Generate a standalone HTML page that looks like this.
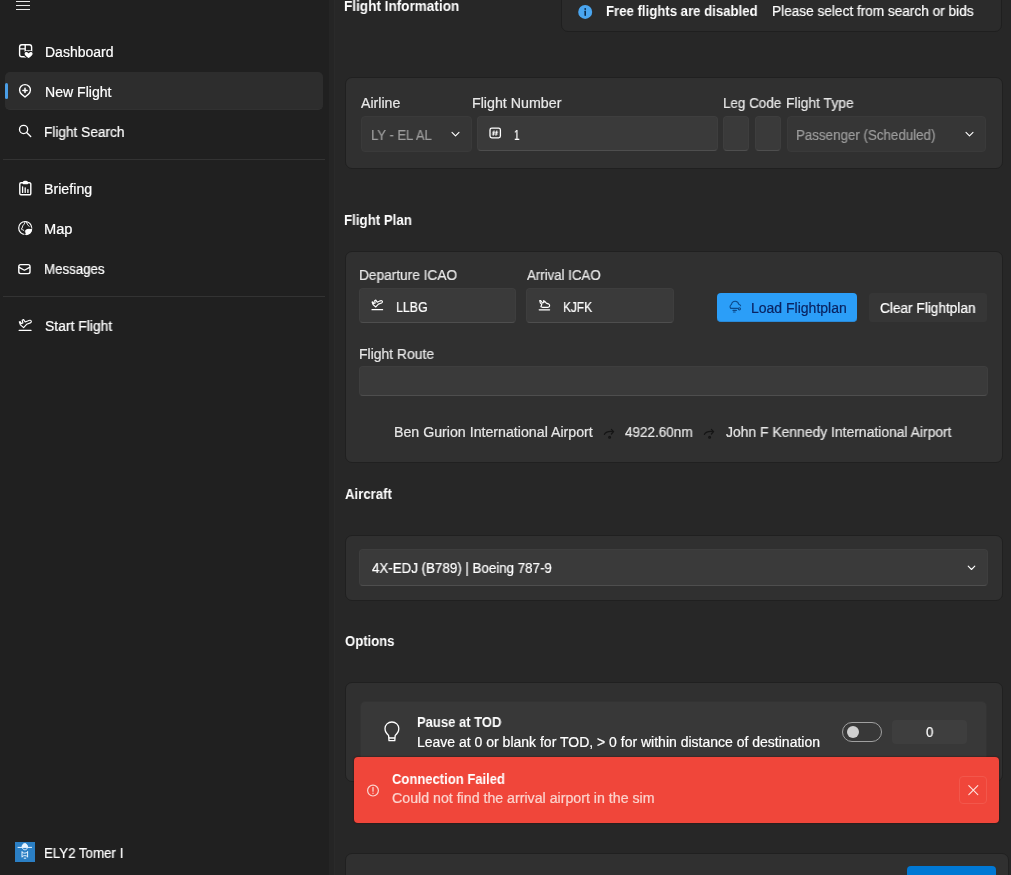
<!DOCTYPE html>
<html><head><meta charset="utf-8"><style>
*{box-sizing:border-box;margin:0;padding:0}
html,body{width:1011px;height:875px;overflow:hidden;background:#272727;font-family:"Liberation Sans",sans-serif;color:#fff;font-size:14px}
.a{position:absolute}
.t{position:absolute;white-space:nowrap;line-height:16px;font-size:14px;transform-origin:0 0;will-change:transform;-webkit-text-stroke:0.2px currentColor}
.card{position:absolute;left:345px;width:658px;background:#303030;border:1px solid #202020;border-radius:7px}
.inp{position:absolute;background:#3a3a3a;border:1px solid #3e3e3e;border-bottom-color:#4e4e4e;border-radius:4px}
.cmb{position:absolute;background:#363636;border:1px solid #3a3a3a;border-radius:4px}
svg{position:absolute;left:0;top:0}
</style></head><body>

<div class="a" style="left:0;top:0;width:329px;height:875px;background:#202020"></div>
<div class="a" style="left:329px;top:0;width:6px;height:875px;background:#252525"></div>
<div class="a" style="left:334px;top:0;width:1px;height:875px;background:#2a2a2a"></div>

<!-- nav selection -->
<div class="a" style="left:5px;top:72px;width:318px;height:38px;background:#2d2d2d;border-radius:5px;border-bottom:1px solid #313131"></div>
<div class="a" style="left:5px;top:83px;width:3px;height:16px;background:#4a9ee6;border-radius:2px"></div>
<div class="a" style="left:3px;top:159px;width:322px;height:1px;background:#333"></div>
<div class="a" style="left:3px;top:296px;width:322px;height:1px;background:#333"></div>

<!-- avatar -->
<div class="a" style="left:15px;top:842px;width:20px;height:20px;background:#2b7fc4"></div>

<!-- info bar -->
<div class="a" style="left:561px;top:-8px;width:441px;height:40px;background:#2b2b2b;border:1px solid #1f1f1f;border-radius:7px"></div>

<!-- card 1 -->
<div class="card" style="top:77px;height:92px"></div>
<div class="cmb" style="left:361px;top:116px;width:111px;height:36px"></div>
<div class="inp" style="left:477px;top:116px;width:241px;height:35px"></div>
<div class="inp" style="left:723px;top:116px;width:26px;height:35px"></div>
<div class="inp" style="left:755px;top:116px;width:26px;height:35px"></div>
<div class="cmb" style="left:787px;top:116px;width:199px;height:36px"></div>

<!-- card 2 -->
<div class="card" style="top:251px;height:212px"></div>
<div class="inp" style="left:359px;top:288px;width:157px;height:35px"></div>
<div class="inp" style="left:526px;top:288px;width:148px;height:35px"></div>
<div class="a" style="left:717px;top:293px;width:140px;height:29px;background:#2b9ef8;border-radius:4px;border-bottom:1px solid #2a8ad8"></div>
<div class="a" style="left:868px;top:292px;width:120px;height:31px;background:#363636;border:1px solid #303030;border-radius:4px"></div>
<div class="inp" style="left:359px;top:366px;width:629px;height:30px"></div>

<!-- card 3 -->
<div class="card" style="top:535px;height:66px"></div>
<div class="inp" style="left:359px;top:549px;width:629px;height:37px"></div>

<!-- card 4 -->
<div class="card" style="top:682px;height:100px"></div>
<div class="a" style="left:360px;top:701px;width:627px;height:70px;background:#383838;border:1px solid #333;border-radius:5px"></div>
<div class="a" style="left:842px;top:722px;width:40px;height:20px;border:1px solid #a0a0a0;border-radius:10px;background:transparent"></div>
<div class="a" style="left:847px;top:726px;width:12px;height:12px;border-radius:6px;background:#cfcfcf"></div>
<div class="a" style="left:892px;top:720px;width:75px;height:24px;background:#3e3e3e;border-radius:4px"></div>

<!-- toast -->
<div class="a" style="left:354px;top:757px;width:645px;height:66px;background:#f0463a;border-radius:4px;box-shadow:0 0 2px #3a0a06"></div>
<div class="a" style="left:959px;top:776px;width:28px;height:28px;border:1px solid #f2574b;border-radius:4px"></div>

<!-- bottom card -->
<div class="card" style="top:853px;height:40px;width:664px"></div>
<div class="a" style="left:907px;top:866px;width:89px;height:20px;background:#0078d4;border-radius:4px"></div>


<svg width="1011" height="875" viewBox="0 0 1011 875" fill="none" stroke-linecap="round" stroke-linejoin="round">
<!-- hamburger -->
<g stroke="#e6e6e6" stroke-width="1" stroke-linecap="butt">
<path d="M16 1.5H30M16 5.5H30M16 9.5H30"/>
</g>
<g stroke="#fff" stroke-width="1.4">
<!-- dashboard -->
<rect x="19.6" y="44.8" width="12" height="12" rx="2.2"/>
<path d="M25.2 45V56.8M19.8 48.9H25.2M25.2 51H31.4"/>
</g>
<path d="M28.6 52.6C29.8 50.8 33.2 51 33.2 53.8 33.2 55.6 31 57.4 28.6 58.8 26.2 57.4 24 55.6 24 53.8 24 51 27.4 50.8 28.6 52.6Z" fill="#fff" stroke="#202020" stroke-width="1.2"/>
<!-- new flight pin -->
<g stroke="#fff" stroke-width="1.4">
<path d="M25 97.05L21.53 94.14A5.4 5.4 0 1 1 28.47 94.14Z"/>
<path d="M25 88.3V92.5M22.9 90.4H27.1" stroke-width="1.5"/>
<!-- search -->
<circle cx="23.6" cy="129.45" r="4.1" stroke-width="1.3"/>
<path d="M26.6 132.5L30.7 136.4"/>
<!-- briefing -->
<path d="M21 182.8H23.4M27.4 182.8H29.6A1.2 1.2 0 0 1 30.8 184V193.6A1.2 1.2 0 0 1 29.6 194.8H21A1.2 1.2 0 0 1 19.8 193.6V184A1.2 1.2 0 0 1 21 182.8Z"/>
<path d="M23.4 182.4A1.2 1.2 0 0 1 24.6 181.4H26.2A1.2 1.2 0 0 1 27.4 182.4V183.6H23.4Z" fill="#fff"/>
<path d="M22.6 186.8V192.4M25.2 187.8V192.4M27.9 189.6V192.4" stroke-width="1.3"/>
<!-- map globe -->
<circle cx="25.2" cy="228" r="6.5" stroke-width="1.2"/>
<path d="M25 221.8C24.9 223.6 24 224.4 23.2 225.2 22.2 226.2 22.8 227.6 21.6 228.8M21.8 229.6C23 229.6 23.8 230.2 24.4 231.2" stroke-width="1"/>
<path d="M26.6 222C26.8 223.6 27.6 225.2 29.2 226.4" stroke-width="1"/>
<path d="M25.4 230C27.4 228.4 30.8 228.4 32.2 229.6 31.8 232.8 29.6 235 26.4 235.2 25.4 233.4 24.8 231.4 25.4 230Z" fill="#fff" stroke="none"/>
<path d="M24.9 235C24.3 233.2 24.1 231.2 24.9 229.6 26.8 227.8 29.6 227.6 31.6 228.2" stroke="#202020" stroke-width="0.8"/>
<!-- messages -->
<rect x="18.8" y="264.6" width="11.2" height="9" rx="1.8"/>
<path d="M19.2 267.4L24.4 270.2L29.6 267.4" stroke-width="1.3"/>
<!-- start flight -->
<path d="M19.2 330.4H31" stroke-width="1.3"/>
<path d="M19.3 321.8L20.4 324.9L23.6 327.6L26.6 324.3L30.3 322.9C31.6 322.5 31.7 320.6 30.4 320.3 29.4 320.1 28.4 320.5 27.6 320.9L25.2 322L23.6 319.6L22.2 320.3L22.9 323L21.2 323.6L20.3 321.7Z" stroke-width="1.15"/>
</g>
<!-- avatar figure -->
<g stroke="#e8f4ff" stroke-width="1" fill="none">
<path d="M18 847.4H31.6"/>
<path d="M22 847.2C22 845 23.2 843.6 24.8 843.6 26.4 843.6 27.6 845 27.6 847.2" fill="#e8f4ff"/>
<path d="M22.6 848.4C23 850.4 26.8 850.4 27.2 848.4"/>
<path d="M22 851.6V857M27.6 851.6V857M22.4 852.4C24 853.6 25.6 853.4 27.4 852.2M22.4 856.4C24 855.2 25.8 855.4 27.4 856.4M24.2 858.2H25.8"/>
</g>

<!-- info icon -->
<circle cx="585.2" cy="11.9" r="7" fill="#4aa6f0"/>
<path d="M585.2 11.2V15.2" stroke="#0b2a4a" stroke-width="1.6"/>
<circle cx="585.2" cy="9" r="0.9" fill="#0b2a4a"/>

<!-- chevrons -->
<g stroke="#fff" stroke-width="1.1">
<path d="M452 132.4L455.5 135.9L459 132.4"/>
<path d="M966 132.4L969.5 135.9L973 132.4"/>
<path d="M968.2 566.2L971.5 569.5L974.8 566.2"/>
</g>
<!-- hash icon -->
<rect x="490" y="128.2" width="10.4" height="9.6" rx="1.8" stroke="#fff" stroke-width="1.3"/>
<path d="M494 130.8L493.2 135.4M496.8 130.8L496 135.4M492.6 132.2H497.8M492.2 134H497.4" stroke="#fff" stroke-width="0.9"/>

<!-- departure icon -->
<g stroke="#fff" stroke-width="1.2">
<path d="M372 309.7H382.6"/>
<g transform="translate(372.1 300.1) scale(0.86) translate(-19.3 -319.6)">
<path d="M19.3 321.8L20.4 324.9L23.6 327.6L26.6 324.3L30.3 322.9C31.6 322.5 31.7 320.6 30.4 320.3 29.4 320.1 28.4 320.5 27.6 320.9L25.2 322L23.6 319.6L22.2 320.3L22.9 323L21.2 323.6L20.3 321.7Z" stroke-width="1.35"/>
</g>
<!-- arrival icon -->
<path d="M539.2 309.8H549.6"/>
<path d="M539.7 300.5L540.4 303.1L541.8 304.2L540.9 306.7L542.3 307.3H548.3C549.8 307.1 550.1 305 548.9 304.1L546.3 303.1L544.8 301.3L543.5 300.7L543.9 302.5L542.4 302.9L540.7 300.5Z" stroke-width="1.15"/>
</g>
<!-- cloud icon -->
<g stroke="#0c4a8c" stroke-width="1.1">
<path d="M731 308.4C729.7 307.8 729.6 305.2 731.5 304.5 731.8 302.6 733.3 301.2 735.2 301.2 737 301.2 738.4 302.5 738.8 304.3 739.8 304.5 740.4 305 740.6 305.8"/>
<path d="M731 308.4H737.6"/>
<circle cx="739.4" cy="308.8" r="1.1"/>
<path d="M733 310.4H736.4M733.4 312H735.2"/>
</g>
<!-- route arrows (dark) -->
<g stroke="#151515" stroke-width="1.2">
<path d="M604.4 434.4C606 431.6 609.4 431.2 613 431.6M611.4 429.4L613.6 431.6 611.4 434"/>
<circle cx="609.6" cy="437.2" r="0.9"/>
<path d="M704.4 434.4C706 431.6 709.4 431.2 713 431.6M711.4 429.4L713.6 431.6 711.4 434"/>
<circle cx="709.6" cy="437.2" r="0.9"/>
</g>

<!-- bulb -->
<path d="M388.6 735.4C386.4 733.6 385 731.2 385 728.6 385 724.8 388 722 391.9 722 395.8 722 398.8 724.8 398.8 728.6 398.8 731.2 397.4 733.6 395.2 735.4L394.8 740.6H389Z M389.4 738H394.4" stroke="#fff" stroke-width="1.3"/>

<!-- error icon -->
<circle cx="373" cy="790.6" r="5.4" stroke="#fbd6cf" stroke-width="1.2"/>
<path d="M373 787.6V791.2" stroke="#fbd6cf" stroke-width="1.3"/>
<circle cx="373" cy="793.2" r="0.7" fill="#fbd6cf"/>
<!-- close X -->
<path d="M968.8 785.6L977.8 794.6M977.8 785.6L968.8 794.6" stroke="#fde4e0" stroke-width="1.1"/>
</svg>

<div class="t" style="left:44.5px;top:43.95px;color:#ffffff">Dashboard</div>
<div class="t" style="left:44.7px;top:83.95px;color:#ffffff;transform:scaleX(1.0046)">New Flight</div>
<div class="t" style="left:44.22px;top:123.95px;color:#ffffff;transform:scaleX(0.9753)">Flight Search</div>
<div class="t" style="left:44.28px;top:181.15px;color:#ffffff;transform:scaleX(1.0152)">Briefing</div>
<div class="t" style="left:44.15px;top:221.15px;color:#ffffff;transform:scaleX(1.0462)">Map</div>
<div class="t" style="left:44.25px;top:261.15px;color:#ffffff;transform:scaleX(0.9492)">Messages</div>
<div class="t" style="left:44.81px;top:317.95px;color:#ffffff;transform:scaleX(0.9925)">Start Flight</div>
<div class="t" style="left:44.05px;top:845.05px;color:#ffffff;transform:scaleX(0.9488)">ELY2 Tomer I</div>
<div class="t" style="left:344.33px;top:-1.85px;color:#ffffff;font-weight:bold;-webkit-text-stroke:0;transform:scaleX(0.9678)">Flight Information</div>
<div class="t" style="left:606.46px;top:3.45px;color:#ffffff;font-weight:bold;-webkit-text-stroke:0;transform:scaleX(0.9412)">Free flights are disabled</div>
<div class="t" style="left:771.93px;top:3.45px;color:#ffffff;transform:scaleX(0.9738)">Please select from search or bids</div>
<div class="t" style="left:361.3px;top:95.15px;color:#e8e8e8;transform:scaleX(1.0103)">Airline</div>
<div class="t" style="left:471.68px;top:95.15px;color:#e8e8e8;transform:scaleX(1.0172)">Flight Number</div>
<div class="t" style="left:722.64px;top:95.15px;color:#e8e8e8;transform:scaleX(0.9583)">Leg Code</div>
<div class="t" style="left:785.71px;top:95.15px;color:#e8e8e8;transform:scaleX(0.991)">Flight Type</div>
<div class="t" style="left:371.07px;top:127.15px;color:#9d9d9d;transform:scaleX(0.9344)">LY - EL AL</div>
<div class="t" style="left:514.29px;top:127.15px;color:#ffffff;transform:scaleX(0.7143)">1</div>
<div class="t" style="left:796.25px;top:127.15px;color:#9d9d9d;transform:scaleX(0.9531)">Passenger (Scheduled)</div>
<div class="t" style="left:344.25px;top:211.85px;color:#ffffff;font-weight:bold;-webkit-text-stroke:0;transform:scaleX(0.9486)">Flight Plan</div>
<div class="t" style="left:359.02px;top:267.15px;color:#e8e8e8;transform:scaleX(0.9768)">Departure ICAO</div>
<div class="t" style="left:527.3px;top:267.15px;color:#e8e8e8;transform:scaleX(0.9462)">Arrival ICAO</div>
<div class="t" style="left:395.52px;top:298.95px;color:#ffffff;transform:scaleX(0.8824)">LLBG</div>
<div class="t" style="left:562.65px;top:298.95px;color:#ffffff;transform:scaleX(0.8485)">KJFK</div>
<div class="t" style="left:750.7px;top:300.15px;color:#0a2462">Load Flightplan</div>
<div class="t" style="left:879.8px;top:300.15px;color:#ffffff;transform:scaleX(0.9745)">Clear Flightplan</div>
<div class="t" style="left:358.91px;top:345.55px;color:#e8e8e8;transform:scaleX(0.9946)">Flight Route</div>
<div class="t" style="left:394.49px;top:424.45px;color:#e6e6e6;transform:scaleX(1.0133)">Ben Gurion International Airport</div>
<div class="t" style="left:625.4px;top:424.45px;color:#e6e6e6;transform:scaleX(0.9643)">4922.60nm</div>
<div class="t" style="left:726.2px;top:424.45px;color:#e6e6e6;transform:scaleX(0.9925)">John F Kennedy International Airport</div>
<div class="t" style="left:345.2px;top:486.45px;color:#ffffff;font-weight:bold;-webkit-text-stroke:0;transform:scaleX(0.94)">Aircraft</div>
<div class="t" style="left:372.1px;top:560.25px;color:#ffffff;transform:scaleX(0.9524)">4X-EDJ (B789) | Boeing 787-9</div>
<div class="t" style="left:345.2px;top:632.85px;color:#ffffff;font-weight:bold;-webkit-text-stroke:0;transform:scaleX(0.9358)">Options</div>
<div class="t" style="left:417.47px;top:713.85px;color:#ffffff;font-weight:bold;-webkit-text-stroke:0;transform:scaleX(0.9289)">Pause at TOD</div>
<div class="t" style="left:417.4px;top:733.65px;color:#ffffff">Leave at 0 or blank for TOD, &gt; 0 for within distance of destination</div>
<div class="t" style="left:925.5px;top:723.75px;color:#ffffff;transform:scaleX(0.9375)">0</div>
<div class="t" style="left:392.4px;top:771.25px;color:#ffffff;font-weight:bold;-webkit-text-stroke:0;transform:scaleX(0.9306)">Connection Failed</div>
<div class="t" style="left:392.4px;top:790.15px;color:#fbd3cd;transform:scaleX(1.0131)">Could not find the arrival airport in the sim</div>
</body></html>
